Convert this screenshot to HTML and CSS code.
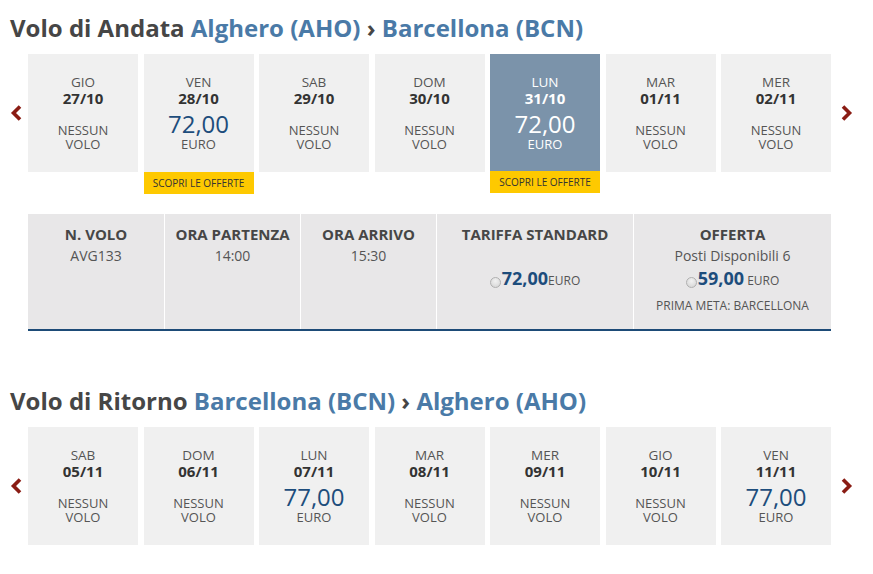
FILE: index.html
```html
<!DOCTYPE html>
<html lang="it">
<head>
<meta charset="utf-8">
<title>Voli</title>
<link rel="stylesheet" href="styles.css">
</head>
<body>
<main class="page">
  <section class="leg">
    <h2 class="leg-title">Volo di Andata <span class="route">Alghero (AHO)</span> <span class="sep">›</span> <span class="route">Barcellona (BCN)</span></h2>
    <div class="carousel">
      <button class="nav prev" aria-label="Precedente"><svg width="12" height="16" viewBox="0 0 12 16"><path d="M10 1.5 L3.5 8 L10 14.5" fill="none" stroke="#8a1c14" stroke-width="3.6"/></svg></button>
      <ul class="days">
        <li class="day"><div class="card"><span class="dow">GIO</span><span class="date">27/10</span><div class="info"><span class="none">NESSUN<br>VOLO</span></div></div></li>
        <li class="day"><div class="card"><span class="dow">VEN</span><span class="date">28/10</span><div class="info"><span class="price">72,00</span><span class="cur">EURO</span></div></div><div class="badge">SCOPRI LE OFFERTE</div></li>
        <li class="day"><div class="card"><span class="dow">SAB</span><span class="date">29/10</span><div class="info"><span class="none">NESSUN<br>VOLO</span></div></div></li>
        <li class="day"><div class="card"><span class="dow">DOM</span><span class="date">30/10</span><div class="info"><span class="none">NESSUN<br>VOLO</span></div></div></li>
        <li class="day"><div class="card selected"><span class="dow">LUN</span><span class="date">31/10</span><div class="info"><span class="price">72,00</span><span class="cur">EURO</span></div></div><div class="badge">SCOPRI LE OFFERTE</div></li>
        <li class="day"><div class="card"><span class="dow">MAR</span><span class="date">01/11</span><div class="info"><span class="none">NESSUN<br>VOLO</span></div></div></li>
        <li class="day"><div class="card"><span class="dow">MER</span><span class="date">02/11</span><div class="info"><span class="none">NESSUN<br>VOLO</span></div></div></li>
      </ul>
      <button class="nav next" aria-label="Successivo"><svg width="12" height="16" viewBox="0 0 12 16"><path d="M2 1.5 L8.5 8 L2 14.5" fill="none" stroke="#8a1c14" stroke-width="3.6"/></svg></button>
    </div>

    <div class="flights">
      <div class="cell">
        <div class="th">N. VOLO</div>
        <div class="td">AVG133</div>
      </div>
      <div class="cell">
        <div class="th">ORA PARTENZA</div>
        <div class="td">14:00</div>
      </div>
      <div class="cell">
        <div class="th">ORA ARRIVO</div>
        <div class="td">15:30</div>
      </div>
      <div class="cell std">
        <div class="th">TARIFFA STANDARD</div>
        <label class="fare"><span class="radio"></span><span class="amount">72,00</span><span class="fare-cur">EURO</span></label>
      </div>
      <div class="cell">
        <div class="th">OFFERTA</div>
        <div class="td">Posti Disponibili 6</div>
        <label class="fare"><span class="radio"></span><span class="amount">59,00</span> <span class="fare-cur">EURO</span></label>
        <div class="note">PRIMA META: BARCELLONA</div>
      </div>
    </div>
  </section>

  <section class="leg return">
    <h2 class="leg-title">Volo di Ritorno <span class="route">Barcellona (BCN)</span> <span class="sep">›</span> <span class="route">Alghero (AHO)</span></h2>
    <div class="carousel">
      <button class="nav prev" aria-label="Precedente"><svg width="12" height="16" viewBox="0 0 12 16"><path d="M10 1.5 L3.5 8 L10 14.5" fill="none" stroke="#8a1c14" stroke-width="3.6"/></svg></button>
      <ul class="days">
        <li class="day"><div class="card"><span class="dow">SAB</span><span class="date">05/11</span><div class="info"><span class="none">NESSUN<br>VOLO</span></div></div></li>
        <li class="day"><div class="card"><span class="dow">DOM</span><span class="date">06/11</span><div class="info"><span class="none">NESSUN<br>VOLO</span></div></div></li>
        <li class="day"><div class="card"><span class="dow">LUN</span><span class="date">07/11</span><div class="info"><span class="price">77,00</span><span class="cur">EURO</span></div></div></li>
        <li class="day"><div class="card"><span class="dow">MAR</span><span class="date">08/11</span><div class="info"><span class="none">NESSUN<br>VOLO</span></div></div></li>
        <li class="day"><div class="card"><span class="dow">MER</span><span class="date">09/11</span><div class="info"><span class="none">NESSUN<br>VOLO</span></div></div></li>
        <li class="day"><div class="card"><span class="dow">GIO</span><span class="date">10/11</span><div class="info"><span class="none">NESSUN<br>VOLO</span></div></div></li>
        <li class="day"><div class="card"><span class="dow">VEN</span><span class="date">11/11</span><div class="info"><span class="price">77,00</span><span class="cur">EURO</span></div></div></li>
      </ul>
      <button class="nav next" aria-label="Successivo"><svg width="12" height="16" viewBox="0 0 12 16"><path d="M2 1.5 L8.5 8 L2 14.5" fill="none" stroke="#8a1c14" stroke-width="3.6"/></svg></button>
    </div>
  </section>
</main>
</body>
</html>
```

FILE: styles.css
```css
* { box-sizing: border-box; }

html, body {
  margin: 0;
  padding: 0;
  background: #ffffff;
}

body {
  font-family: "Open Sans", "Liberation Sans", sans-serif;
  color: #555555;
}

.page {
  padding: 12px 0 0 10px;
  width: 873px;
}

.leg-title {
  margin: 0;
  font-size: 24px;
  line-height: 32px;
  font-weight: 700;
  color: #464646;
  white-space: nowrap;
}

.leg-title .route { color: #4a7aa7; }
.leg-title .sep { color: #464646; }

.carousel {
  display: flex;
  align-items: flex-start;
  margin-top: 10px;
}

.nav {
  border: 0;
  background: none;
  padding: 0;
  margin: 0;
  height: 118px;
  display: flex;
  align-items: center;
  cursor: pointer;
}

.nav svg { display: block; }

.nav.prev {
  width: 18px;
  padding-left: 0;
  justify-content: flex-start;
}

.nav.next {
  width: 42px;
  padding-left: 10px;
  justify-content: flex-start;
}

.days {
  list-style: none;
  margin: 0;
  padding: 0;
  width: 803px;
  display: grid;
  grid-template-columns: repeat(7, 1fr);
  column-gap: 5.5px;
}

.card {
  height: 118px;
  background: #f0f0f0;
  padding-top: 20px;
  display: flex;
  flex-direction: column;
  align-items: center;
  text-align: center;
}

.dow {
  font-size: 13.5px;
  line-height: 16px;
  color: #555555;
}

.date {
  font-size: 15px;
  line-height: 16px;
  font-weight: 700;
  color: #333333;
}

.info {
  height: 45px;
  display: flex;
  flex-direction: column;
  justify-content: flex-end;
  align-items: center;
}

.none {
  font-size: 13px;
  line-height: 14px;
  color: #555555;
}

.price {
  font-size: 24px;
  line-height: 26px;
  color: #1d4d7c;
}

.cur {
  font-size: 13px;
  line-height: 14px;
  color: #555555;
}

.card.selected {
  background: #7b93aa;
  height: 117px;
}

.card.selected .dow,
.card.selected .date,
.card.selected .price,
.card.selected .cur { color: #ffffff; }

.badge {
  height: 22px;
  background: #fec900;
  color: #333333;
  font-size: 10px;
  line-height: 22px;
  text-align: center;
}

.flights {
  margin: 20px 0 0 18px;
  width: 803px;
  height: 117px;
  display: grid;
  grid-template-columns: 136px 136px 136px 197px 1fr;
  background: #e8e7e8;
  border-bottom: 2px solid #1d4b77;
}

.cell {
  padding-top: 9px;
  text-align: center;
  display: flex;
  flex-direction: column;
  align-items: center;
}

.cell + .cell { border-left: 1px solid #ffffff; }

.th {
  font-size: 15px;
  line-height: 22px;
  font-weight: 700;
  color: #464646;
}

.td {
  font-size: 14px;
  line-height: 22px;
  color: #555555;
}

.fare {
  font-size: 12px;
  line-height: 22px;
  color: #555555;
  white-space: nowrap;
}

.std .fare { margin-top: 22px; }

.radio {
  display: inline-block;
  width: 11px;
  height: 11px;
  border-radius: 50%;
  border: 1px solid #b0b0b0;
  background: radial-gradient(circle at 50% 35%, #f2f2f2 0%, #d2d2d2 100%);
  vertical-align: -3px;
  margin-right: 1px;
}

.amount {
  font-size: 18px;
  font-weight: 700;
  color: #1d4d7c;
}

.note {
  margin-top: 5px;
  font-size: 12px;
  line-height: 18px;
  color: #555555;
}

.return { margin-top: 54px; }
```
